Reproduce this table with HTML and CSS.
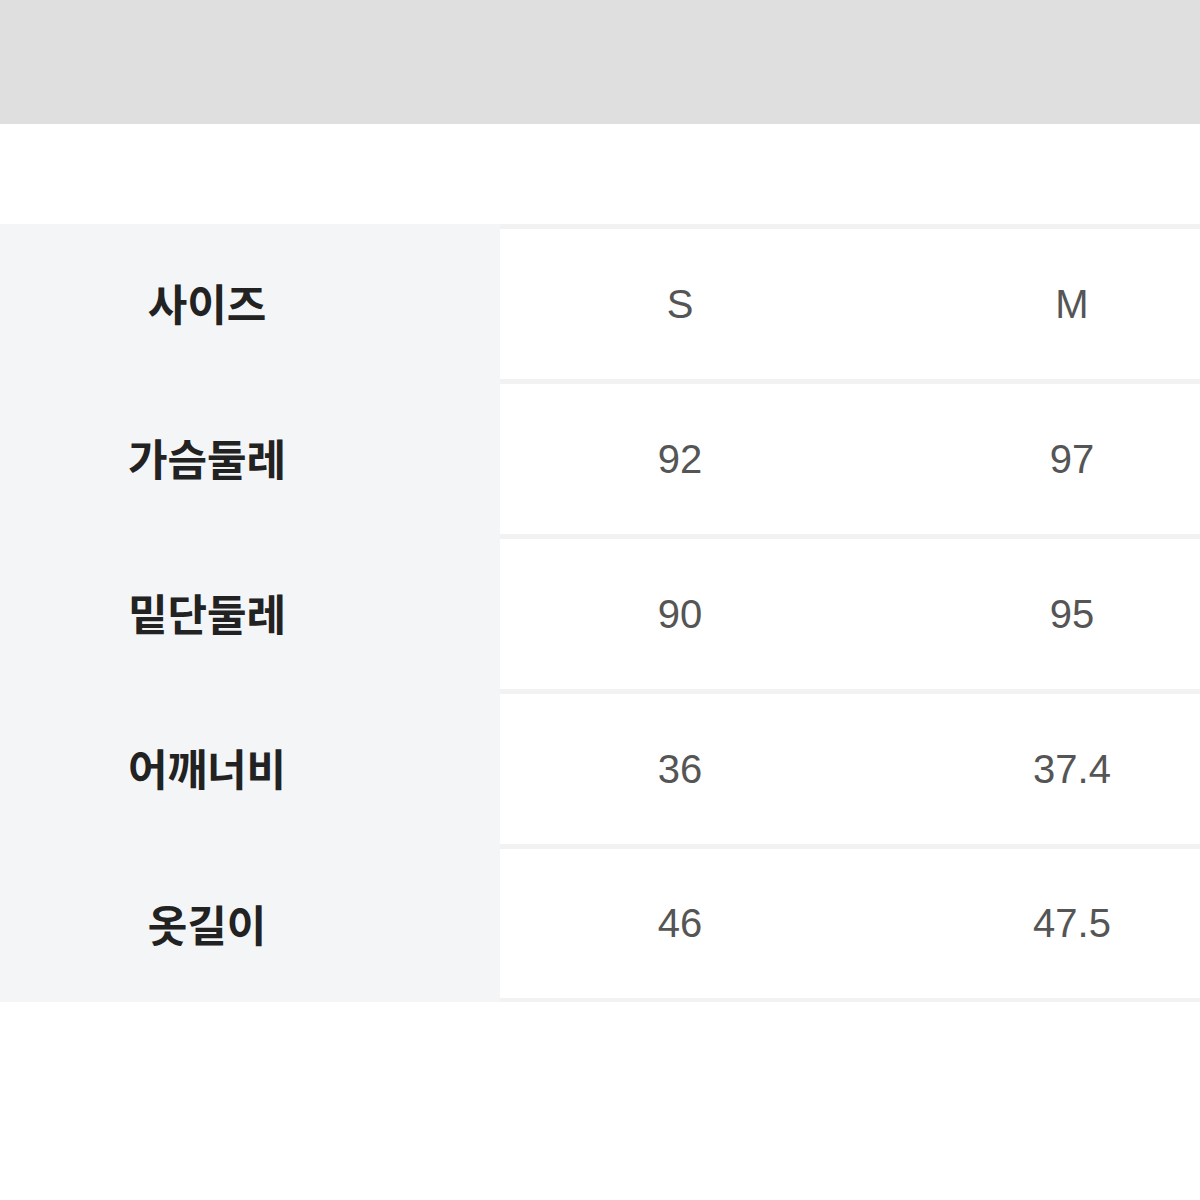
FILE: index.html
```html
<!DOCTYPE html>
<html lang="ko">
<head>
    <meta charset="UTF-8">
    <meta name="viewport" content="width=device-width, initial-scale=1.0">
    <title>사이즈표</title>
    <link rel="stylesheet" href="styles.css">
</head>
<body>
    <div class="top-bar"></div>
    <div class="size-table">
        <div class="row">
            <div class="label">사이즈</div>
            <div class="value">S</div>
            <div class="value">M</div>
        </div>
        <div class="row">
            <div class="label">가슴둘레</div>
            <div class="value">92</div>
            <div class="value">97</div>
        </div>
        <div class="row">
            <div class="label">밑단둘레</div>
            <div class="value">90</div>
            <div class="value">95</div>
        </div>
        <div class="row">
            <div class="label">어깨너비</div>
            <div class="value">36</div>
            <div class="value">37.4</div>
        </div>
        <div class="row">
            <div class="label">옷길이</div>
            <div class="value">46</div>
            <div class="value">47.5</div>
        </div>
    </div>
</body>
</html>
```

FILE: styles.css
```css
body {
    margin: 0;
    background-color: #fff;
    font-family: "Noto Sans CJK KR", "Noto Sans", sans-serif;
    overflow: hidden;
}
.top-bar {
    height: 124px;
    background-color: #dfdfdf;
}
.size-table {
    margin-top: 100px;
}
.row {
    display: grid;
    grid-template-columns: 500px 360px 1fr;
    height: 155px;
}
.row:last-child {
    height: 158px;
}
.label {
    background-color: #f4f5f7;
    display: flex;
    align-items: center;
    justify-content: center;
    padding-right: 86px;
    font-size: 43px;
    font-weight: 600;
    color: #222;
}
.value {
    display: flex;
    align-items: center;
    justify-content: center;
    border-top: 5px solid #f2f2f2;
    font-family: "Liberation Sans", Arial, sans-serif;
    font-size: 40px;
    color: #555;
}
.value:last-child {
    padding-left: 84px;
}
.row:last-child .value {
    border-bottom: 4px solid #f2f2f2;
}
```
